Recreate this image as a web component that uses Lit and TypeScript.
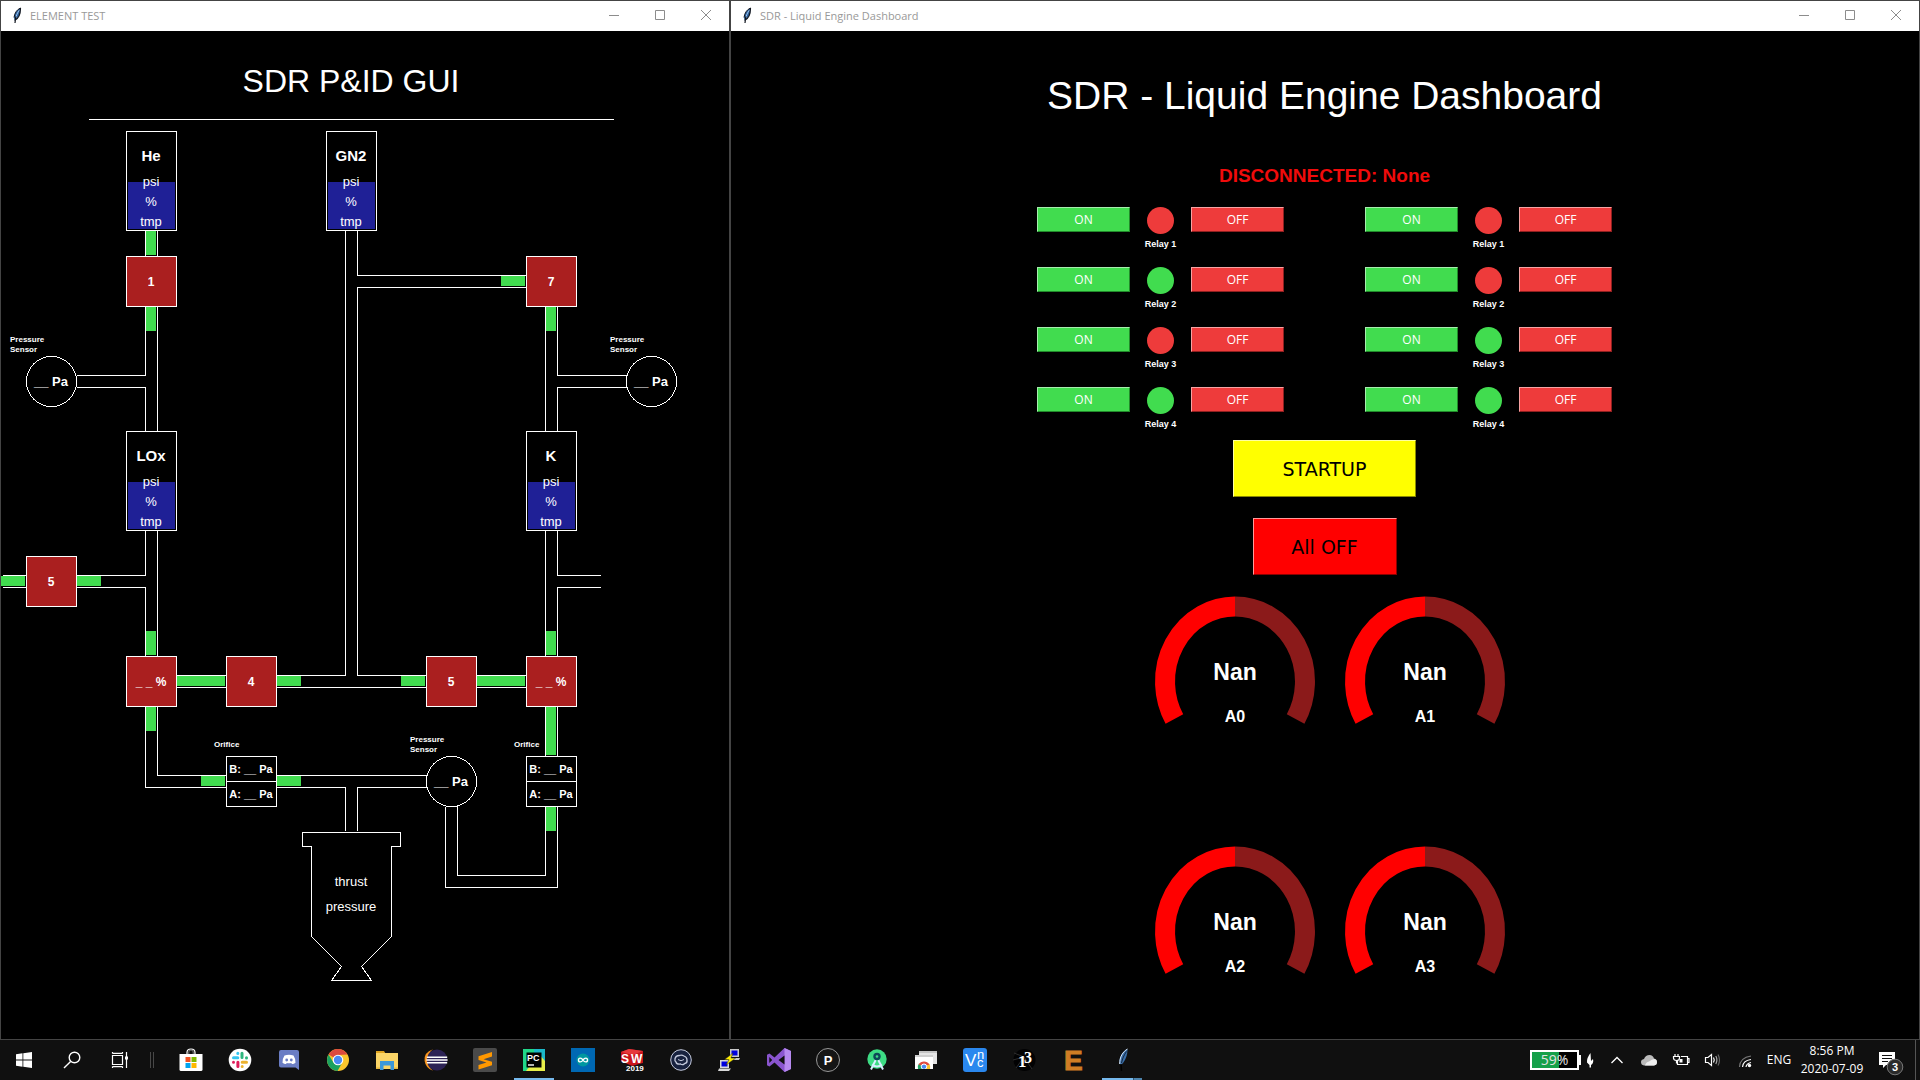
import { LitElement, html, svg, css } from "lit";
import { customElement, property } from "lit/decorators.js";
import { classMap } from "lit/directives/class-map.js";

/* ------------------------------------------------------------------ */
/* Window frame                                                        */
/* ------------------------------------------------------------------ */

const feather = svg`
  <path d="M11.5 1C8 2.500 5.500 6 5 10.500L5.500 13.500C9 12 11.500 7 11.500 1Z" fill="#2c5f9e"/>
  <path d="M11.500 1C8 2.500 5.500 6 5 10.500" stroke="#10151d" fill="none" stroke-width="1"/>
  <path d="M10.500 3C8.500 5.500 7.200 8.500 6.700 11.500" stroke="#9cc4ea" fill="none" stroke-width="1"/>
  <path d="M11.500 1C11.500 7 9 12 5.500 13.500M6.800 9.500L6 16" stroke="#10151d" fill="none" stroke-width="1.200"/>`;

@customElement("app-window")
export class AppWindow extends LitElement {
  @property() caption = "";

  static styles = css`
    :host {
      display: flex;
      flex-direction: column;
      box-sizing: border-box;
      border: 1px solid #444;
      background: #000;
      min-width: 0;
    }
    .bar {
      display: flex;
      align-items: flex-start;
      height: 30px;
      background: #fff;
      color: #999;
      font: 11px/29px "Open Sans", "Noto Sans", sans-serif;
    }
    .bar .logo {
      width: 16px;
      height: 17px;
      margin: 6px 5px 0 8px;
    }
    .caption {
      flex: 1;
      white-space: nowrap;
      overflow: hidden;
    }
    .control {
      width: 46px;
      height: 28px;
      padding: 0;
      border: 0;
      background: none;
    }
    .control svg {
      display: block;
      margin: auto;
      width: 12px;
      height: 12px;
      fill: none;
      stroke: #8c8c8c;
    }
    .body {
      flex: 1;
      display: flex;
      flex-direction: column;
      min-height: 0;
    }
  `;

  render() {
    return html`
      <header class="bar">
        <svg class="logo" viewBox="0 0 16 17">${feather}</svg>
        <span class="caption">${this.caption}</span>
        <button class="control" aria-label="Minimize">
          <svg viewBox="0 0 12 12"><path d="M1 6.500H11" /></svg>
        </button>
        <button class="control" aria-label="Maximize">
          <svg viewBox="0 0 12 12"><path d="M1.500 1.500H10.500V10.500H1.500Z" /></svg>
        </button>
        <button class="control" aria-label="Close">
          <svg viewBox="0 0 12 12"><path d="M1 1L11 11M11 1L1 11" /></svg>
        </button>
      </header>
      <div class="body"><slot></slot></div>
    `;
  }
}

/* ------------------------------------------------------------------ */
/* Piping and instrumentation diagram                                  */
/* ------------------------------------------------------------------ */

const TANKS = [
  { x: 125, y: 100, name: "He" },
  { x: 325, y: 100, name: "GN2" },
  { x: 125, y: 400, name: "LOx" },
  { x: 525, y: 400, name: "K" },
];

const VALVES = [
  { x: 125, y: 225, label: "1" },
  { x: 525, y: 225, label: "7" },
  { x: 25, y: 525, label: "5" },
  { x: 125, y: 625, label: "_ _ %" },
  { x: 225, y: 625, label: "4" },
  { x: 425, y: 625, label: "5" },
  { x: 525, y: 625, label: "_ _ %" },
];

const SENSORS = [
  { x: 50, y: 350, tagX: 9, tagY: 311 },
  { x: 650, y: 350, tagX: 609, tagY: 311 },
  { x: 450, y: 750, tagX: 409, tagY: 711 },
];

const ORIFICES = [
  { x: 225, y: 725 },
  { x: 525, y: 725 },
];

/* Open pipe ends: x, y, width, height of the flow markers. */
const FLOWS = [
  [145, 200, 10, 24], [145, 276, 10, 24], [545, 276, 10, 24], [500, 245, 24, 10],
  [0, 545, 24, 10], [76, 545, 24, 10],
  [145, 600, 10, 24], [145, 676, 10, 24], [545, 600, 10, 24], [545, 676, 10, 48],
  [176, 645, 48, 10], [276, 645, 24, 10], [400, 645, 24, 10], [476, 645, 48, 10],
  [200, 745, 24, 10], [276, 745, 24, 10], [545, 776, 10, 24],
];

const PIPES = [
  "M144 199V225M156 199V225",
  "M144 275V344H75M156 275V400M75 356H144V400",
  "M144 499V544H75M156 499V625M75 556H144V625M1 544H25M1 556H25",
  "M175 644H225M175 656H225M144 675V756H225M156 675V744H225",
  "M344 199V644H275M356 199V244H525M525 256H356V644H425M275 656H425",
  "M475 644H525M475 656H525",
  "M544 275V400M556 275V344H625V356H556V400",
  "M544 499V625M556 499V544H599M599 556H556V625",
  "M544 675V725M556 675V725",
  "M275 744H426M275 756H344V799M426 756H356V799",
  "M444 775V856H556V775M456 775V844H544V775M444 775H456",
].join("");

/* One-pixel seams where two grid cells of piping meet. */
const SEAMS = [
  "M500 244V245M500 256V257M600 344V345M600 356V357",
  "M200 644V645M200 656V657M500 644V645M500 656V657",
  "M200 744V745M200 756V757M400 744V745M400 756V757M400 644V645M400 656V657",
  "M144 600H145M156 600H157M544 600H545M556 600H557M544 700H545M556 700H557",
].join("");

@customElement("pid-diagram")
export class PidDiagram extends LitElement {
  static styles = css`
    :host {
      display: flex;
      flex: 1;
      min-height: 0;
    }
    svg {
      flex: 1;
      min-width: 0;
      font-family: "Liberation Sans", Arial, sans-serif;
    }
    text { fill: #fff; text-anchor: middle; }
    .line { fill: none; stroke: #fff; shape-rendering: crispEdges; }
    .shape { fill: #000; stroke: #fff; shape-rendering: crispEdges; }
    .valve { fill: #aa1f1f; stroke: #fff; shape-rendering: crispEdges; }
    .level { fill: #1f2096; }
    .flow { fill: #41dc4f; }
    .seam { stroke: #000; stroke-width: 1; fill: none; shape-rendering: crispEdges; }
    .title { font-size: 32px; }
    .name { font-size: 15px; font-weight: bold; }
    .read { font-size: 13px; }
    .value { font-size: 13px; font-weight: bold; }
    .num { font-size: 12px; font-weight: bold; }
    .small { font-size: 11px; font-weight: bold; }
    .tag { font-size: 8px; font-weight: bold; text-anchor: start; }
  `;

  render() {
    return html`
      <svg viewBox="0 0 728 1008" preserveAspectRatio="xMinYMin meet" role="img" aria-label="SDR P&amp;ID GUI">
        <text class="title" x="350" y="61">SDR P&amp;ID GUI</text>
        <g transform="translate(.5 .5)">
          <path class="line" d="M87 88H612" />
          <path class="line" d=${PIPES} />
        </g>
        <g transform="translate(.5 .5)"><path class="seam" d=${SEAMS} /></g>
        ${FLOWS.map(([x, y, w, h]) => svg`<rect class="flow" x=${x} y=${y} width=${w} height=${h} />`)}
        ${TANKS.map((t) => svg`
          <rect class="shape" x=${t.x + 0.5} y=${t.y + 0.5} width="50" height="99" />
          <rect class="level" x=${t.x + 2} y=${t.y + 51} width="47" height="47" />
          <text class="name" x=${t.x + 25} y=${t.y + 30}>${t.name}</text>
          <text class="read" x=${t.x + 25} y=${t.y + 55}>psi</text>
          <text class="read" x=${t.x + 25} y=${t.y + 75}>%</text>
          <text class="read" x=${t.x + 25} y=${t.y + 95}>tmp</text>`)}
        ${VALVES.map((v) => svg`
          <rect class="valve" x=${v.x + 0.5} y=${v.y + 0.5} width="50" height="50" />
          <text class="num" x=${v.x + 25} y=${v.y + 30}>${v.label}</text>`)}
        ${SENSORS.map((s) => svg`
          <circle class="shape" cx=${s.x + 0.5} cy=${s.y + 0.5} r="25" />
          <text class="value" x=${s.x} y=${s.y + 5}>__ Pa</text>
          <text class="tag" x=${s.tagX} y=${s.tagY}>Pressure</text>
          <text class="tag" x=${s.tagX} y=${s.tagY + 10}>Sensor</text>`)}
        ${ORIFICES.map((o) => svg`
          <rect class="shape" x=${o.x + 0.5} y=${o.y + 0.5} width="50" height="50" />
          <path class="line" d="M${o.x} ${o.y + 25.5}h50" />
          <text class="small" x=${o.x + 25} y=${o.y + 17}>B: __ Pa</text>
          <text class="small" x=${o.x + 25} y=${o.y + 42}>A: __ Pa</text>
          <text class="tag" x=${o.x - 12} y=${o.y - 9}>Orifice</text>`)}
        <g transform="translate(.5 .5)">
          <path class="line" d="M301 801H399V815H390V905L360 935L370 949H330L340 935L310 905V815H301Z" />
        </g>
        <text class="read" x="350" y="855">thrust</text>
        <text class="read" x="350" y="880">pressure</text>
      </svg>
    `;
  }
}

/* ------------------------------------------------------------------ */
/* Dashboard                                                           */
/* ------------------------------------------------------------------ */

@customElement("relay-switch")
export class RelaySwitch extends LitElement {
  @property() name = "";
  @property({ type: Boolean }) on = false;

  static styles = css`
    :host {
      display: grid;
      grid-template-columns: 93px 61px 93px;
      height: 47px;
      align-items: start;
    }
    .btn {
      box-sizing: border-box;
      height: 25px;
      padding: 0;
      color: #fff;
      font: 12px/20px "Open Sans", "Noto Sans", sans-serif;
      border: 1px solid;
    }
    .go { background: #41dc4f; border-color: #a5eeac #218a2a #218a2a #a5eeac; }
    .stop { background: #ee3b3b; border-color: #f7a3a3 #8f2020 #8f2020 #f7a3a3; }
    .state {
      display: flex;
      flex-direction: column;
      align-items: center;
      gap: 4px;
      color: #fff;
      font: bold 9px/12px "Liberation Sans", Arial, sans-serif;
    }
    .lamp {
      width: 27px;
      height: 27px;
      border-radius: 50%;
      background: #ee3b3b;
    }
    .lamp.lit { background: #41dc4f; }
  `;

  render() {
    return html`
      <button class="btn go">ON</button>
      <div class="state">
        <span class=${classMap({ lamp: true, lit: this.on })}></span>
        <span>${this.name}</span>
      </div>
      <button class="btn stop">OFF</button>
    `;
  }
}

@customElement("arc-gauge")
export class ArcGauge extends LitElement {
  @property() name = "";
  @property() value = "Nan";

  static styles = css`
    :host { display: block; }
    svg { display: block; width: 190px; height: 160px; }
    path { fill: none; stroke-width: 20; }
    .track { stroke: #8b1a1a; }
    .fill { stroke: #f00; }
    text {
      fill: #fff;
      text-anchor: middle;
      font-family: "Liberation Sans", Arial, sans-serif;
      font-weight: bold;
    }
    .value { font-size: 23px; }
    .name { font-size: 16px; }
  `;

  render() {
    return html`
      <svg viewBox="0 0 190 160">
        <path class="track" d="M95 31.500A70 75 0 0 1 155.600 144" />
        <path class="fill" d="M34.400 144A70 75 0 0 1 95 31.500" />
        <text class="value" x="95" y="105">${this.value}</text>
        <text class="name" x="95" y="147">${this.name}</text>
      </svg>
    `;
  }
}

const RELAYS = [
  { left: false, right: false },
  { left: true, right: false },
  { left: false, right: true },
  { left: true, right: true },
];

@customElement("engine-dashboard")
export class EngineDashboard extends LitElement {
  static styles = css`
    :host {
      display: flex;
      flex-direction: column;
      align-items: center;
      padding-right: 1px;
      font-family: "Liberation Sans", Arial, sans-serif;
    }
    .title {
      margin: 42px 0 0;
      color: #fff;
      font-weight: normal;
      font-size: 39px;
      line-height: 46px;
    }
    .status {
      margin: 45px 0 0;
      color: #f00b0b;
      font-weight: bold;
      font-size: 19px;
      line-height: 24px;
    }
    .relays {
      display: grid;
      grid-template-columns: auto auto;
      gap: 13px 81px;
      margin-top: 19px;
    }
    .action {
      box-sizing: border-box;
      height: 57px;
      padding: 0;
      color: #000;
      font: 19px/24px "DejaVu Sans", Verdana, sans-serif;
      border: 1px solid;
    }
    .startup {
      width: 183px;
      margin-top: 6px;
      background: #ff0;
      border-color: #ffffa0 #8a8a00 #8a8a00 #ffffa0;
    }
    .all-off {
      width: 144px;
      margin-top: 21px;
      background: #f00;
      border-color: #ff9a9a #8a0000 #8a0000 #ff9a9a;
    }
    .gauges {
      display: grid;
      grid-template-columns: auto auto;
      row-gap: 90px;
      padding-left: 11px;
    }
  `;

  render() {
    return html`
      <h1 class="title">SDR - Liquid Engine Dashboard</h1>
      <p class="status">DISCONNECTED: None</p>
      <div class="relays">
        ${RELAYS.map((r, i) => html`
          <relay-switch name="Relay ${i + 1}" ?on=${r.left}></relay-switch>
          <relay-switch name="Relay ${i + 1}" ?on=${r.right}></relay-switch>
        `)}
      </div>
      <button class="action startup">STARTUP</button>
      <button class="action all-off">All OFF</button>
      <div class="gauges">
        ${["A0", "A1", "A2", "A3"].map((n) => html`<arc-gauge name=${n}></arc-gauge>`)}
      </div>
    `;
  }
}

/* ------------------------------------------------------------------ */
/* Taskbar                                                             */
/* ------------------------------------------------------------------ */

const SYSTEM_ICONS = [
  { name: "Start", art: svg`<path fill="#fff" d="M4 6.300L10.500 5.300V11.600H4ZM11.300 5.200L20 4V11.600H11.300ZM4 12.400H10.500V18.700L4 17.700ZM11.300 12.400H20V20L11.300 18.800Z"/>` },
  { name: "Search", art: svg`<g fill="none" stroke="#fff" stroke-width="1.400"><circle cx="14.500" cy="9.500" r="5.300"/><path d="M10.600 13.400L4 20"/></g>` },
  { name: "Task View", art: svg`<g fill="none" stroke="#fff" stroke-width="1.200"><path d="M4.500 7.500H14.500V16.500H4.500ZM4.500 4V5.500M14.500 4V5.500M4.500 5.400H14.500M4.500 18.600H14.500M4.500 18.500V20M14.500 18.500V20M18.500 4V20"/></g><rect x="17" y="8.500" width="3" height="3" fill="#fff"/>` },
];

const APP_ICONS = [
  { name: "Store", art: svg`<path d="M8 7V4.500Q8 1 12 1T16 4.500V7" fill="none" stroke="#fff" stroke-width="1.200"/><path d="M9.800 7V4Q9.800 2 12 2T14.200 4V7" fill="none" stroke="#999" stroke-width=".8"/><path fill="#fff" d="M.5 6H23.500V21.500Q23.500 23 22 23H2Q.5 23 .5 21.500Z"/><path fill="#f25022" d="M6.500 9H11.500V14H6.500Z"/><path fill="#7fba00" d="M12.500 9H17.500V14H12.500Z"/><path fill="#00a4ef" d="M6.500 15H11.500V20H6.500Z"/><path fill="#ffb900" d="M12.500 15H17.500V20H12.500Z"/>` },
  { name: "Slack", art: svg`<circle cx="12" cy="12" r="11.300" fill="#fff"/><g stroke-width="3" stroke-linecap="round"><path stroke="#36c5f0" d="M5.500 9.800H9.800M9.800 5.300V5.500"/><path stroke="#2eb67d" d="M14 5.300V9.600M18.500 9.800V9.900"/><path stroke="#ecb22e" d="M14.200 14.200H18.500M14.200 18.500V18.600"/><path stroke="#e01e5a" d="M9.900 14.300V18.600M5.500 14.200V14.300"/></g>` },
  { name: "Discord", art: svg`<path d="M4 2H20Q22 2 22 4V22L18.500 19.500H4Q2 19.500 2 17.500V4Q2 2 4 2Z" fill="#6a7dc4"/><path d="M7.500 7.500Q12 6 16.500 7.500Q18.800 11 18.500 14.800Q16.500 16.300 15 16L14.200 15Q12 15.500 9.800 15L9 16Q7.500 16.300 5.500 14.800Q5.200 11 7.500 7.500Z" fill="#fff"/><circle cx="9.700" cy="12" r="1.400" fill="#6a7dc4"/><circle cx="14.300" cy="12" r="1.400" fill="#6a7dc4"/>` },
  { name: "Chrome", art: svg`<circle cx="12" cy="12" r="11" fill="#fbc52c"/><path d="M12 12L2.500 6.500A11 11 0 0 1 21.500 6.500L12 7Z" fill="#dc4a3e"/><path d="M2.500 6.500A11 11 0 0 0 11.500 23L16 15L12 12L7.500 14.500Z" fill="#1aa15f"/><circle cx="12" cy="12" r="5.300" fill="#fff"/><circle cx="12" cy="12" r="4.200" fill="#4a8af4"/>` },
  { name: "Explorer", art: svg`<path d="M1 3H9L10.500 5.500H1Z" fill="#e0a420"/><path d="M1 5H23V21H1Z" fill="#fbd567"/><path d="M5 13H19V22H15.500V17.500H8.500V22H5Z" fill="#3c98d9"/><path d="M1 19.500H5V21H1ZM19 19.500H23V21H19Z" fill="#e8b83e"/>` },
  { name: "Eclipse", art: svg`<circle cx="13" cy="12" r="10.500" fill="#2c2255"/><path d="M9 1.300Q-.5 4.500 .6 13Q1.800 20.500 9 22.700Q3 18.500 3 12T9 1.300Z" fill="#f7941e"/><path d="M2.800 9.200H23.200M2.400 12H23.600M2.800 14.800H23.200" stroke="#fff" stroke-width="1.500"/>` },
  { name: "Sublime Text", art: svg`<rect width="24" height="24" rx="2" fill="#4a4a4a"/><path d="M19 4V8.500L10.500 11.200L19 13.800V17.300L5.500 21.500V17L13.500 14.400L5.500 12V8.200Z" fill="#ff9800"/>` },
  { name: "PyCharm", active: true, art: svg`<path d="M1 1H14L20 6V23H1Z" fill="#21d789"/><path d="M12 1H23V14L12 18Z" fill="#1bb8c9"/><path d="M17 6L23 13V23H4Z" fill="#e8ee4a"/><rect x="4.500" y="4.500" width="15" height="15" fill="#000"/><text x="5" y="12.500" font-size="9" font-weight="bold" fill="#fff">PC</text><path d="M6 17H12" stroke="#fff" stroke-width="1.400"/>` },
  { name: "Arduino", art: svg`<rect width="24" height="24" fill="#0068b3"/><circle cx="12" cy="12" r="6.500" fill="#0097a0"/><path d="M12 12C10.500 9.500 7.500 9.500 7.500 12S10.500 14.500 12 12S16.500 9.500 16.500 12S13.500 14.500 12 12" fill="none" stroke="#fff" stroke-width="1.400"/>` },
  { name: "SolidWorks", art: svg`<path d="M1 4L9 1L23 3V15L12 18L1 13Z" fill="#c9151c"/><path d="M1 4L9 1L23 3L13 7Z" fill="#e5383c"/><text x="1" y="15" font-size="12" font-weight="bold" fill="#fff">S</text><text x="11" y="15" font-size="12" font-weight="bold" fill="#fff">W</text><text x="6" y="23" font-size="8" font-weight="bold" fill="#fff">2019</text>` },
  { name: "Viewer", art: svg`<circle cx="12" cy="12" r="10.300" fill="#18223f" stroke="#c3c9dc" stroke-width="1"/><path d="M6 11Q6.500 7.500 10.500 7.500Q12.500 6.500 15 8Q18 9 18 12Q18.500 15 15.500 15.700Q13.500 17.500 11.500 16Q7.500 16.500 7 14Q5.500 13 6 11Z" fill="none" stroke="#c3c9dc" stroke-width="1.300"/><path d="M9 11.500Q12 14 15 11.500" stroke="#c3c9dc" fill="none"/>` },
  { name: "PuTTY", art: svg`<path d="M12 1H21V9H12ZM11 10H22L21 12H12Z" fill="#c9c9c9"/><path d="M13.500 2.500H19.500V7.500H13.500Z" fill="#0000e0"/><path d="M2 12H11V20H2ZM1 20.500H13L11 23H0Z" fill="#d9d9d9"/><path d="M3.500 13.500H9.500V18.500H3.500Z" fill="#0000e0"/><path d="M15 5L6.500 11.500L11 11.800L8 17L17.500 10.300L13 10Z" fill="#ffee00" stroke="#222" stroke-width=".5"/>` },
  { name: "Visual Studio", art: svg`<path d="M17.500 0L24 3V21L17.500 24L7.500 14.500L2.500 18.500L0 17.200V6.800L2.500 5.500L7.500 9.500Z" fill="#8a55cf"/><path d="M17.500 0L24 3V21L17.500 24Z" fill="#b78af0"/><path d="M17.500 7.500V16.500L11.500 12ZM2.300 9L5.200 12L2.300 15Z" fill="#101010"/>` },
  { name: "Processing", art: svg`<circle cx="12" cy="12" r="11.500" fill="#151515" stroke="#b9b9b9" stroke-width=".8"/><text x="12" y="16.500" font-size="13" font-weight="bold" fill="#fff" text-anchor="middle">P</text>` },
  { name: "Android Studio", art: svg`<circle cx="12" cy="11" r="9.700" fill="#3ddc84"/><path d="M10.700 12L6 21.500M13.300 12L18 21.500M7 16.500Q12 20.500 17 16.500" stroke="#d7efff" stroke-width="2" fill="none"/><circle cx="12" cy="8.500" r="3.700" fill="#0d4858"/><circle cx="12" cy="8.500" r="1.300" fill="#3ddc84"/>` },
  { name: "Remote Desktop", art: svg`<rect x="5" y="3" width="18" height="13" fill="#e4e4e4"/><path d="M5 3H23V5H5Z" fill="#c4c4c4"/><rect x="1" y="7" width="18" height="14" fill="#fff"/><path d="M1 7H19V9H1Z" fill="#cfcfcf"/><path d="M4 21A6 6 0 0 1 5 15.500L10 21Z" fill="#23a566"/><path d="M16 21A6 6 0 0 0 15 15.500L10 21Z" fill="#fbc52c"/><path d="M4.500 16.500A6.500 6.500 0 0 1 15.500 16.500L10 18.500Z" fill="#e04a3f"/><circle cx="10" cy="18.700" r="2.700" fill="#4a8af4" stroke="#fff"/><path d="M1 21H19V24H1Z" fill="#101010"/>` },
  { name: "VNC Viewer", art: svg`<rect width="24" height="24" rx="3" fill="#2a87ee"/><text x="2" y="18" font-size="17" fill="#fff">V</text><text x="14" y="11" font-size="13" fill="#fff">n</text><text x="14" y="19" font-size="13" fill="#fff">c</text>` },
  { name: "Thirteen", art: svg`<circle cx="12.500" cy="12" r="11" fill="#020203"/><path d="M1 12L12 9L4 20M2 5L12 9L20 21" stroke="#2f2f2f" fill="none"/><text x="6" y="19" class="serif" font-size="17" font-weight="bold" fill="#fff">1</text><text x="12" y="15" class="serif" font-size="16" font-weight="bold" fill="#fff">3</text>` },
  { name: "Eagle", art: svg`<text x="3" y="22" font-size="28" font-weight="bold" fill="#cf7d24" stroke="#cf7d24">E</text>` },
  { name: "Tk", active: true, stacked: true, art: svg`<path d="M17.500 1C12 3.500 9 9 9.500 15.500L11 17C15.500 13 17.500 7 17.500 1Z" fill="#3a6ea8"/><path d="M17.500 1C13 3.500 9.500 9 9.700 16" stroke="#d8e6f5" fill="none"/><path d="M16.500 3.500C14 7 12.300 11 11.500 15" stroke="#14263d" fill="none"/><path d="M11 16L11.500 23" stroke="#000" stroke-width="1.500"/>` },
];

@customElement("task-bar")
export class TaskBar extends LitElement {
  static styles = css`
    :host {
      display: flex;
      align-items: stretch;
      height: 40px;
      background: #101010;
      color: #fff;
      font: 12px/18px "Open Sans", "Noto Sans", sans-serif;
    }
    button {
      display: flex;
      align-items: center;
      justify-content: center;
      padding: 0;
      border: 0;
      background: none;
      color: inherit;
      font: inherit;
    }
    svg { display: block; width: 24px; height: 24px; overflow: visible; font-family: "Liberation Sans", Arial, sans-serif; }
    .serif { font-family: "Liberation Serif", "Times New Roman", serif; }
    .icon { width: 48px; }
    .grip {
      width: 2px;
      height: 16px;
      margin: 12px 13px 12px 6px;
      border: solid #484848;
      border-width: 0 1px;
    }
    .apps { display: flex; flex: 1; gap: 1px; }
    .active {
      background: linear-gradient(#76b9ed, #76b9ed) 50% 100% / 40px 2px no-repeat;
    }
    .stacked {
      background:
        linear-gradient(90deg, #76b9ed 31px, #2f5673 31px, #2f5673 32px, #4d84ad 32px)
        50% 100% / 40px 2px no-repeat;
    }
    .tray { display: flex; align-items: center; }
    .battery {
      position: relative;
      box-sizing: border-box;
      width: 49px;
      height: 20px;
      border: 2px solid #fff;
      background: linear-gradient(90deg, #16a04a 27px, #000 27px);
      color: #e3e3e3;
      font: 14px/16px "Open Sans", "Noto Sans", sans-serif;
      text-align: center;
    }
    .battery::after {
      content: "";
      position: absolute;
      right: -4px;
      top: 3px;
      width: 2px;
      height: 10px;
      background: #fff;
    }
    .tray .power { width: 22px; }
    .tray .slot { width: 32px; }
    .lang { width: 36px; }
    .clock { width: 70px; flex-direction: column; height: 40px; }
    .notes { width: 48px; }
    .notes svg { width: 26px; height: 26px; }
    .peek { width: 5px; border-left: 1px solid #555; box-sizing: border-box; }
  `;

  render() {
    return html`
      ${SYSTEM_ICONS.map((i) => html`
        <button class="icon" aria-label=${i.name}><svg viewBox="0 0 24 24">${i.art}</svg></button>`)}
      <span class="grip"></span>
      <div class="apps">
        ${APP_ICONS.map((i: any) => html`
          <button class=${classMap({ icon: true, active: !!i.active, stacked: !!i.stacked })} aria-label=${i.name}>
            <svg viewBox="0 0 24 24">${i.art}</svg>
          </button>`)}
      </div>
      <div class="tray">
        <div class="battery">59%</div>
        <button class="power" aria-label="Power saver">
          <svg viewBox="0 0 24 24"><path d="M12.500 5Q8.500 10 9 14.500L11.500 17V19.500H13V17Q16 15 15 11L13 13Z" fill="#fff"/></svg>
        </button>
        <button class="slot" aria-label="Show hidden icons">
          <svg viewBox="0 0 24 24"><path d="M6.500 15L12 9.500L17.500 15" fill="none" stroke="#fff" stroke-width="1.300"/></svg>
        </button>
        <button class="slot" aria-label="OneDrive">
          <svg viewBox="0 0 24 24"><path d="M7 17.500Q4 17 4 14Q4 11.500 7 11Q8.500 7 12.500 7Q16 7 17 10.500Q20 11 20 14Q20 17 17 17.500Z" fill="#bbb"/><path d="M8 17.500Q9 14 12 13.500Q15 11 17.500 11Q20 11.500 20 14Q20 17 17 17.500Z" fill="#efefef"/></svg>
        </button>
        <button class="slot" aria-label="Battery charging">
          <svg viewBox="0 0 24 24"><g fill="none" stroke="#fff" stroke-width="1.200"><path d="M12 8.500H18.500V16.500H8.500V13M18.500 10.500H20V14.500H18.500M6 6V8.500M9 6V8.500M4.500 8.500H10.500V10Q10.500 12.500 7.500 12.500T4.500 10ZM7.500 12.500V15.500"/></g><path d="M10.500 11H13.500V14.500H10.500Z" fill="#fff"/></svg>
        </button>
        <button class="slot" aria-label="Volume">
          <svg viewBox="0 0 24 24"><g fill="none" stroke="#fff" stroke-width="1.200"><path d="M4.500 9.500H7L10.500 6.500V17.500L7 14.500H4.500ZM12.500 9.500Q14 12 12.500 14.500"/><path d="M14.800 8Q17 12 14.800 16" stroke="#aaa"/><path d="M17 6.500Q20 12 17 17.500" stroke="#666"/></g></svg>
        </button>
        <button class="slot" aria-label="Network">
          <svg viewBox="0 0 24 24"><g fill="none" stroke="#fff" stroke-width="1.200"><path d="M13 19Q13.500 15.500 18 14.500M9.500 19Q10 12.500 18 11.500" /><path d="M6.500 19Q7 9.500 18 8" stroke="#777"/></g><circle cx="16.500" cy="17.500" r="1.700" fill="#fff"/></svg>
        </button>
        <button class="lang">ENG</button>
        <button class="clock"><span>8:56 PM</span><span>2020-07-09</span></button>
        <button class="notes" aria-label="Notifications">
          <svg viewBox="0 0 26 26"><path d="M1 5H17V18H8L5 21V18H1Z" fill="#fff"/><path d="M4 8.500H14M4 11.500H14M4 14.500H10" stroke="#101010"/><circle cx="17" cy="20" r="7.800" fill="#2b2b2b" stroke="#777"/><text x="17" y="24" font-size="11" font-weight="bold" text-anchor="middle" fill="#fff">3</text></svg>
        </button>
      </div>
      <span class="peek"></span>
    `;
  }
}

/* ------------------------------------------------------------------ */
/* Desktop                                                             */
/* ------------------------------------------------------------------ */

@customElement("app-root")
export class AppRoot extends LitElement {
  static styles = css`
    :host {
      display: flex;
      flex-direction: column;
      min-height: 100vh;
      background: #000;
    }
    .desktop {
      flex: 1;
      display: grid;
      grid-template-columns: 73fr 119fr;
      min-height: 0;
    }
  `;

  render() {
    return html`
      <main class="desktop">
        <app-window caption="ELEMENT TEST"><pid-diagram></pid-diagram></app-window>
        <app-window caption="SDR - Liquid Engine Dashboard"><engine-dashboard></engine-dashboard></app-window>
      </main>
      <task-bar></task-bar>
    `;
  }
}
